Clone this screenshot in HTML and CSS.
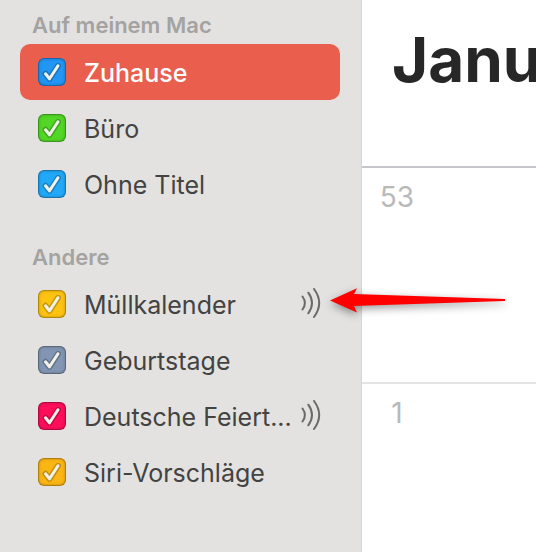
FILE: index.html
```
<!DOCTYPE html>
<html lang="de">
<head>
<meta charset="utf-8">
<meta name="viewport" content="width=device-width">
<title>Kalender</title>
<link rel="stylesheet" href="styles.css">
</head>
<body>
<svg class="symbols" aria-hidden="true">
  <symbol id="check" viewBox="0 0 28 28">
    <path class="check-edge" d="M7.500 15.800l4 5L20 7.800"/>
    <path class="check-mark" d="M7.500 15.800l4 5L20 7.800"/>
  </symbol>
  <symbol id="waves" viewBox="0 0 22 32">
    <path d="M2.500 8.500q4.800 6.500 0 13M8.300 4.700q7.400 10.300 0 20.600M14 1q10.400 14 0 28"/>
  </symbol>
</svg>
<div class="app">
  <aside class="sidebar">
    <section class="group">
      <h2 class="group-title">Auf meinem Mac</h2>
      <label class="row selected"><span class="box azure"><input type="checkbox" checked><svg class="check"><use href="#check"/></svg></span><span class="name">Zuhause</span></label>
      <label class="row"><span class="box green"><input type="checkbox" checked><svg class="check"><use href="#check"/></svg></span><span class="name">Büro</span></label>
      <label class="row"><span class="box sky"><input type="checkbox" checked><svg class="check"><use href="#check"/></svg></span><span class="name">Ohne Titel</span></label>
    </section>
    <section class="group">
      <h2 class="group-title">Andere</h2>
      <label class="row"><span class="box yellow"><input type="checkbox" checked><svg class="check"><use href="#check"/></svg></span><span class="name">Müllkalender</span><svg class="waves"><use href="#waves"/></svg></label>
      <label class="row"><span class="box slate"><input type="checkbox" checked><svg class="check"><use href="#check"/></svg></span><span class="name">Geburtstage</span></label>
      <label class="row"><span class="box pink"><input type="checkbox" checked><svg class="check"><use href="#check"/></svg></span><span class="name">Deutsche Feiert...</span><svg class="waves"><use href="#waves"/></svg></label>
      <label class="row"><span class="box amber"><input type="checkbox" checked><svg class="check"><use href="#check"/></svg></span><span class="name">Siri-Vorschläge</span></label>
    </section>
  </aside>
  <main class="calendar">
    <header class="month"><h1>Janu</h1></header>
    <div class="week"><span class="week-number">53</span></div>
    <div class="week"><span class="week-number">1</span></div>
  </main>
  <svg class="arrow" viewBox="0 0 190 40" aria-hidden="true">
    <path d="M5 16.500L32 4.300 29 10 180 15v2L29 22l3 6.500z"/>
  </svg>
</div>
</body>
</html>
```
FILE: styles.css
```
* { box-sizing: border-box; }

body {
  margin: 0;
  background: #fff;
  color: #434342;
  font-family: Inter, "Liberation Sans", sans-serif;
}

h1, h2 { margin: 0; }

.symbols { position: absolute; width: 0; height: 0; }

.app {
  position: relative;
  display: flex;
  min-height: 100vh;
  overflow: hidden;
}

.sidebar {
  flex: 0 0 362px;
  padding: 8px 21px 0 20px;
  background: #e3e2e0;
  border-right: 1px solid #d6d5d5;
}

.group { margin-bottom: 28px; }

.group-title {
  margin-bottom: 2px;
  padding-left: 12px;
  color: #a4a3a1;
  font-size: 22px;
  font-weight: 600;
  line-height: 34px;
}

.row {
  display: flex;
  align-items: center;
  height: 56px;
  padding: 0 18px;
  border-radius: 10px;
  font-size: 25px;
  line-height: 32px;
}

.selected {
  background: #e95e4c;
  color: #fff;
  font-weight: 500;
}

.box {
  display: grid;
  flex: none;
  width: 28px;
  height: 28px;
  margin-right: 18px;
}

.box input {
  grid-area: 1 / 1;
  appearance: none;
  width: 28px;
  height: 28px;
  margin: 0;
  border: 1px solid rgba(0, 0, 0, 0.3);
  border-radius: 6px;
  background: currentColor;
  box-shadow: inset 0 0 3px rgba(0, 0, 0, 0.25);
  color: inherit;
}

.azure { color: #2196f5; }
.green { color: #52d726; }
.sky { color: #22a8f8; }
.yellow { color: #fec311; }
.slate { color: #8296b3; }
.pink { color: #fe0e5b; }
.amber { color: #fbb614; }

.check {
  grid-area: 1 / 1;
  width: 28px;
  height: 28px;
  fill: none;
  stroke-linecap: round;
  stroke-linejoin: round;
  pointer-events: none;
}

.check-edge { stroke: rgba(0, 0, 0, 0.22); stroke-width: 6px; }
.check-mark { stroke: #f3f2ea; stroke-width: 3px; }

.name {
  padding-top: 2px;
  white-space: nowrap;
}

.waves {
  flex: none;
  width: 22px;
  height: 32px;
  margin-left: auto;
  fill: none;
  stroke: #6a6a68;
  stroke-width: 2px;
  stroke-linecap: round;
}

.calendar {
  display: flex;
  flex: 1;
  flex-direction: column;
  min-width: 0;
  overflow: hidden;
}

.month {
  flex: none;
  height: 168px;
  padding: 20px 0 0 30px;
  border-bottom: 2px solid #c6c5cc;
  color: #272727;
}

.month h1 {
  font-size: 62px;
  font-weight: 700;
  line-height: 80px;
}

.week {
  flex: 0 0 216px;
  padding: 12px 0 0 10px;
  border-bottom: 2px solid #e4e4e4;
}

.week:last-child {
  flex: 1;
  border-bottom: 0;
}

.week-number {
  display: block;
  width: 50px;
  color: #b9b9b9;
  font-size: 28px;
  line-height: 34px;
  text-align: center;
}

/* Pointer laid over the sidebar and the calendar */
.arrow {
  position: absolute;
  top: 284px;
  left: 325px;
  width: 190px;
  height: 40px;
  fill: #f00;
  filter: drop-shadow(0 3px 4px rgba(0, 0, 0, 0.4));
  pointer-events: none;
}
```
